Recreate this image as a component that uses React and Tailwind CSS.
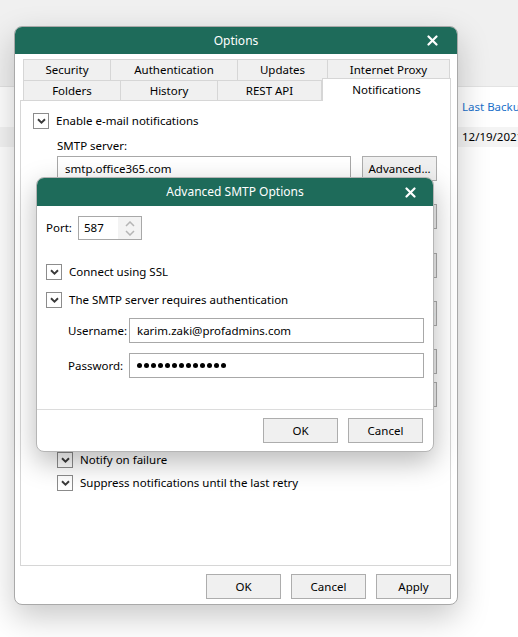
import React from 'react';

const GREEN = 'bg-[#1e6b5a]';

const CloseX = ({ className = '' }) => (
  <svg width="11" height="11" viewBox="0 0 11 11" className={className}>
    <path d="M1.5 1.5 L9.5 9.5 M9.5 1.5 L1.5 9.5" stroke="#fff" strokeWidth="2.2" strokeLinecap="round" />
  </svg>
);

const CheckBox = ({ label, className = '' }) => (
  <div className={`flex h-[16px] items-center gap-[7px] ${className}`}>
    <span className="flex h-[16px] w-[16px] shrink-0 items-center justify-center border border-[#8c8c8c] bg-white">
      <svg width="9" height="6" viewBox="0 0 9 6">
        <path d="M1 1.2 L4.5 4.6 L8 1.2" fill="none" stroke="#3a3a3a" strokeWidth="1.9" />
      </svg>
    </span>
    <span className="whitespace-nowrap">{label}</span>
  </div>
);

const Button = ({ children, className = '' }) => (
  <div className={`flex h-[25px] w-[75px] items-center justify-center border border-[#adadad] bg-[#f0f0f0] ${className}`}>
    {children}
  </div>
);

const TextBox = ({ children, className = '' }) => (
  <div className={`flex h-[25px] items-center border border-[#a8a8a8] bg-white px-[7px] ${className}`}>
    {children}
  </div>
);

const Tab = ({ label, w, first }) => (
  <div className={`flex h-full items-center justify-center border-t border-r border-[#d6d6d6] bg-[#f0f0f0] ${first ? 'border-l' : ''} ${w}`}>
    {label}
  </div>
);

const OptionsDialog = () => (
  <div className="absolute left-[14px] top-[26px] flex h-[579px] w-[444px] flex-col overflow-hidden rounded-[8px] border border-[#a9a9a9] bg-white shadow-[0_12px_32px_rgba(0,0,0,0.22)]">
    <div className={`relative flex h-[27px] shrink-0 items-center justify-center text-[12px] text-white ${GREEN}`}>
      Options
      <CloseX className="absolute right-[19px]" />
    </div>

    <div className="flex flex-1 flex-col pl-[5px] pr-[6px] pt-[5px]">
      <div className="ml-[3px] flex h-[21px]">
        <Tab label="Security" w="w-[88px]" first />
        <Tab label="Authentication" w="w-[127px]" />
        <Tab label="Updates" w="w-[90px]" />
        <Tab label="Internet Proxy" w="w-[122px]" />
      </div>
      <div className="ml-[3px] flex h-[20px] items-end">
        <Tab label="Folders" w="w-[98px]" first />
        <Tab label="History" w="w-[97px]" />
        <Tab label="REST API" w="w-[104px]" />
        <div className="relative z-10 -mb-px flex h-[23px] w-[129px] items-start justify-center border-x border-t border-[#d6d6d6] bg-white pt-[2px]">
          Notifications
        </div>
      </div>

      <div className="flex flex-1 flex-col border border-[#d6d6d6] pl-[12px] pt-[12px]">
        <CheckBox label="Enable e-mail notifications" />
        <div className="ml-[24px] mt-[9px] flex flex-col pr-[13px]">
          <div className="h-[16px] leading-[16px]">SMTP server:</div>
          <div className="mt-[2px] flex gap-[11px]">
            <TextBox className="w-[295px]">smtp.office365.com</TextBox>
            <Button className="w-[74px]">Advanced...</Button>
          </div>
          <div className="mt-[23px] flex justify-end"><Button className="w-[74px]" /></div>
          <div className="mt-[24px] flex justify-end"><Button className="w-[74px]" /></div>
          <div className="mt-[23px] flex justify-end"><Button className="w-[74px] justify-end pr-[2px]">)</Button></div>
          <div className="mt-[23px] flex justify-end"><Button className="w-[74px]" /></div>
          <div className="mt-[8px] flex justify-end"><Button className="h-[24px] w-[74px]" /></div>
          <CheckBox label="Notify on failure" className="mt-[45px]" />
          <CheckBox label="Suppress notifications until the last retry" className="mt-[7px]" />
        </div>
      </div>
    </div>

    <div className="flex justify-end gap-[10px] pb-[5px] pr-[6px] pt-[8px]">
      <Button>OK</Button>
      <Button>Cancel</Button>
      <Button>Apply</Button>
    </div>
  </div>
);

const SpinBox = () => (
  <div className="flex h-[24px] w-[64px] border border-[#a8a8a8] bg-white">
    <div className="flex flex-1 items-center pl-[5px]">587</div>
    <div className="flex w-[23px] flex-col items-center justify-center bg-[#f3f3f3]">
      <svg width="10" height="6" viewBox="0 0 10 6" className="mb-[3px]">
        <path d="M1 5 L5 1 L9 5" fill="none" stroke="#b5b5b5" strokeWidth="1.5" />
      </svg>
      <svg width="10" height="6" viewBox="0 0 10 6">
        <path d="M1 1 L5 5 L9 1" fill="none" stroke="#b5b5b5" strokeWidth="1.5" />
      </svg>
    </div>
  </div>
);

const dots = Array.from({ length: 13 });

const AdvancedDialog = () => (
  <div className="absolute left-[36px] top-[177px] z-20 flex h-[275px] w-[398px] flex-col overflow-hidden rounded-[8px] border border-[#b5b5b5] bg-white shadow-[0_10px_28px_rgba(0,0,0,0.28)]">
    <div className={`relative flex h-[28px] shrink-0 items-center justify-center text-[12px] text-white ${GREEN}`}>
      Advanced SMTP Options
      <CloseX className="absolute right-[17px]" />
    </div>

    <div className="flex flex-1 flex-col px-[9px] pt-[10px]">
      <div className="flex items-center">
        <span className="w-[32px]">Port:</span>
        <SpinBox />
      </div>
      <CheckBox label="Connect using SSL" className="mt-[24px]" />
      <CheckBox label="The SMTP server requires authentication" className="mt-[12px]" />
      <div className="ml-[22px] mt-[10px] flex items-center">
        <span className="w-[61px]">Username:</span>
        <TextBox className="w-[295px]">karim.zaki@profadmins.com</TextBox>
      </div>
      <div className="ml-[22px] mt-[10px] flex items-center">
        <span className="w-[61px]">Password:</span>
        <TextBox className="h-[24px] w-[295px] gap-[2px]">
          {dots.map((_, i) => (
            <span key={i} className="h-[5px] w-[5px] rounded-full bg-black" />
          ))}
        </TextBox>
      </div>
    </div>

    <div className="flex h-[42px] shrink-0 items-start justify-end gap-[10px] border-t border-[#dcdcdc] pr-[10px] pt-[8px]">
      <Button>OK</Button>
      <Button>Cancel</Button>
    </div>
  </div>
);

export default function App() {
  return (
    <div className="relative h-[637px] w-[518px] overflow-hidden bg-white text-[11.5px] text-black [font-family:'Noto_Sans',sans-serif]">
      <div className="h-[87px] border-b border-[#e3e3e3] bg-[#f0f0f0]" />
      <div className="flex h-[40px] items-center whitespace-nowrap pl-[462px] text-[#1a6fc9]">Last Backup</div>
      <div className="flex h-[20px] items-center whitespace-nowrap bg-[#f4f4f4] pl-[462px]">12/19/2021</div>

      <OptionsDialog />
      <AdvancedDialog />
    </div>
  );
}
